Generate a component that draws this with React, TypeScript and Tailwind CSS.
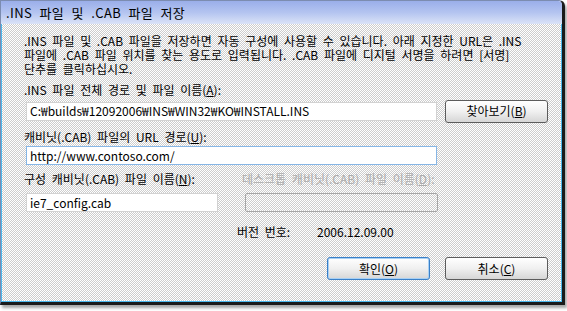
import React from "react";

const font = "font-['Noto_Sans_CJK_KR','Liberation_Sans',sans-serif]";

function U({ c }: { c: string }) {
  return <span className="underline underline-offset-[1px]">{c}</span>;
}

function Btn({ children, def }: { children: React.ReactNode; def?: boolean }) {
  return (
    <div
      className={
        "w-[103px] h-[23px] flex items-center justify-center rounded-[3px] border text-[12px] leading-[12px] text-black bg-gradient-to-b from-[#ffffff] via-[#f0f0f0] to-[#d6d6d6] " +
        (def ? "border-[#3a80c8] shadow-[inset_0_0_0_1px_#a8d0f4]" : "border-[#5c5c5c]")
      }
    >
      {children}
    </div>
  );
}

export default function App() {
  return (
    <div className={"w-[567px] h-[311px] bg-white overflow-hidden " + font}>
      <div className="w-[565px] h-[305px] flex flex-col border-t border-l border-[#7c8cb0] border-r-[3px] border-b-[3px] border-r-[#1a1a1a] border-b-[#1a1a1a] rounded-tr-[6px] shadow-[2px_3px_3px_rgba(0,0,0,0.35)]">
        <div className="h-[23px] flex items-center pl-[5px] bg-gradient-to-b from-[#9aaeea] via-[#b4c4f0] to-[#dbe3f7] rounded-tr-[4px] text-[13px] leading-[13px] tracking-[0.4px] [word-spacing:4px] text-black whitespace-nowrap">
          .INS 파일 및 .CAB 파일 저장
        </div>
        <div className="flex-1 border-l border-r border-b border-[#4cb8ec] bg-[image:repeating-conic-gradient(#cdcdcd_0%_25%,#ffffff_0%_50%)] bg-[length:2px_2px] pl-[22px] pt-[10px] flex flex-col text-[12px] leading-[12px] [word-spacing:3px] text-black">
          <div className="whitespace-nowrap leading-[14px]">
            <div>.INS 파일 및 .CAB 파일을 저장하면 자동 구성에 사용할 수 있습니다. 아래 지정한 URL은 .INS</div>
            <div>파일에 .CAB 파일 위치를 찾는 용도로 입력됩니다. .CAB 파일에 디지털 서명을 하려면 [서명]</div>
            <div>단추를 클릭하십시오.</div>
          </div>

          <div className="mt-[8px] whitespace-nowrap">
            .INS 파일 전체 경로 및 파일 이름(<U c="A" />):
          </div>
          <div className="mt-[4px] h-[22px] flex items-center">
            <div className="ml-[2px] w-[411px] h-[19px] bg-white border border-[#d2d2d2] flex items-center pl-[3px] whitespace-nowrap">
              C:₩builds₩12092006₩INS₩WIN32₩KO₩INSTALL.INS
            </div>
            <div className="ml-[8px]">
              <Btn>
                찾아보기(<U c="B" />)
              </Btn>
            </div>
          </div>

          <div className="mt-[9px] whitespace-nowrap">
            캐비닛(.CAB) 파일의 URL 경로(<U c="U" />):
          </div>
          <div className="mt-[3px] ml-[2px] w-[411px] h-[19px] bg-white border border-[#86b6e6] flex items-center pl-[3px]">
            http://www.contoso.com/
          </div>

          <div className="mt-[8px] flex whitespace-nowrap">
            <div className="w-[218px]">
              구성 캐비닛(.CAB) 파일 이름(<U c="N" />):
            </div>
            <div className="text-[#ababab]">
              데스크톱 캐비닛(.CAB) 파일 이름(<U c="D" />):
            </div>
          </div>
          <div className="mt-[8px] flex">
            <div className="ml-[2px] w-[192px] h-[19px] bg-white border border-[#d2d2d2] flex items-center pl-[3px]">
              ie7_config.cab
            </div>
            <div className="ml-[27px] w-[193px] h-[19px] border border-[#a6a6a6] rounded-[2px]"></div>
          </div>

          <div className="mt-[14px] flex whitespace-nowrap">
            <div className="ml-[213px] w-[80px]">버전 번호:</div>
            <div>2006.12.09.00</div>
          </div>

          <div className="mt-[19px] flex">
            <div className="ml-[303px]">
              <Btn def>
                확인(<U c="O" />)
              </Btn>
            </div>
            <div className="ml-[15px]">
              <Btn>
                취소(<U c="C" />)
              </Btn>
            </div>
          </div>
        </div>
      </div>
    </div>
  );
}
